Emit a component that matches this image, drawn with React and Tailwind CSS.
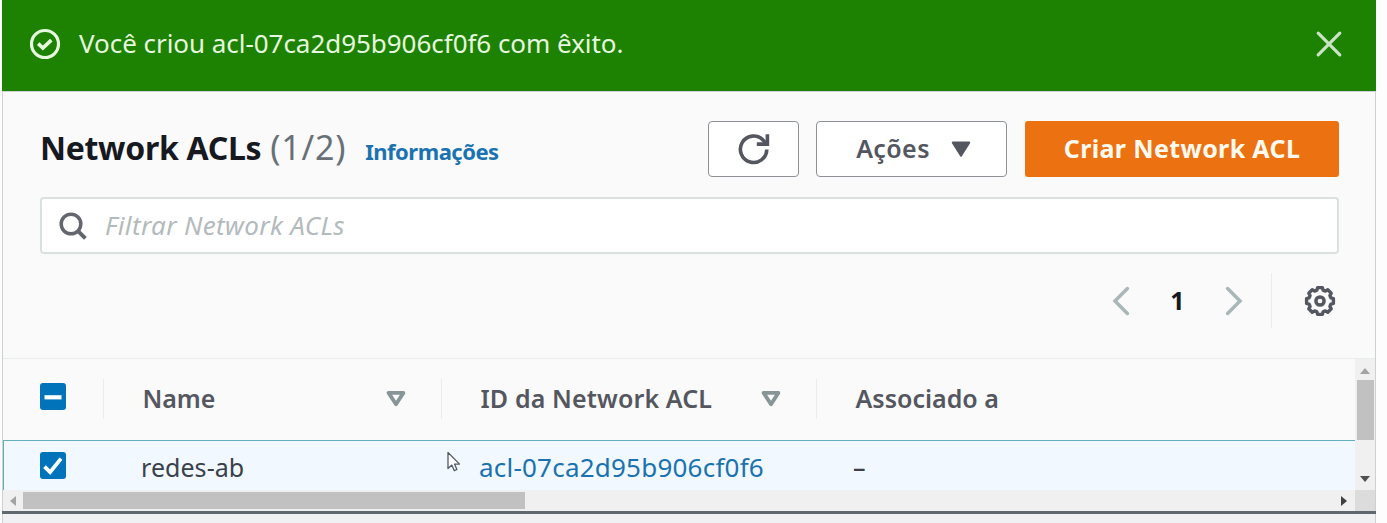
function SuccessIcon() {
  return (
    <svg className="h-8 w-8 shrink-0" viewBox="0 0 32 32" fill="none" stroke="#e6f8df">
      <circle cx="16" cy="16" r="13.5" strokeWidth="3.2" />
      <path d="M9.2 15.6l4.7 4.4 8.4-7.8" strokeWidth="3.7" />
    </svg>
  );
}

function Checkbox({ mixed }) {
  return (
    <span className="flex h-[27px] w-[26px] items-center justify-center rounded-[3px] bg-[#0073bb]">
      <svg className="h-[26px] w-[26px]" viewBox="0 0 26 26" fill="none" stroke="#fff">
        {mixed ? (
          <path d="M4.5 13.3h17" strokeWidth="4.2" />
        ) : (
          <path d="M4.5 13.6l5.6 5.6L21 5.6" strokeWidth="3.8" />
        )}
      </svg>
    </span>
  );
}

function SortIcon() {
  return (
    <svg className="h-4 w-5 shrink-0" viewBox="0 0 20 16" fill="none" stroke="#879596">
      <path d="M2.6 1.9h14.8L10 13.2z" strokeWidth="3.8" strokeLinejoin="round" />
    </svg>
  );
}

function GearIcon() {
  return (
    <svg className="h-8 w-8 shrink-0" viewBox="0 0 32 32" fill="none" stroke="#54575f">
      <circle cx="16" cy="16" r="4.1" strokeWidth="3.5" />
      <path
        d="M13.6 2.6h4.8l.7 2.5 2.3 1 2.4-1.3 3.4 3.4-1.3 2.4 1 2.3 2.5.7v4.8l-2.5.7-1 2.3 1.3 2.4-3.4 3.4-2.4-1.3-2.3 1-.7 2.5h-4.8l-.7-2.5-2.3-1-2.4 1.3-3.4-3.4 1.3-2.4-1-2.3-2.5-.7v-4.8l2.5-.7 1-2.3-1.3-2.4 3.4-3.4 2.4 1.3 2.3-1z"
        strokeWidth="3.4"
        strokeLinejoin="round"
      />
    </svg>
  );
}

function Banner() {
  return (
    <div className="flex h-[91px] shrink-0 items-center bg-[#1d8102] pl-[27px] pr-8 pb-[3px]">
      <SuccessIcon />
      <p className="ml-[18px] flex-1 pb-px text-[26px] tracking-[-0.04px] text-[#e6f8df]">
        Você criou acl-07ca2d95b906cf0f6 com êxito.
      </p>
      <button aria-label="Fechar">
        <svg className="h-[30px] w-[30px]" viewBox="0 0 30 30" stroke="#c9e4c5" strokeWidth="3.2" strokeLinecap="round">
          <path d="M4.2 4.2l21.6 21.6M25.8 4.2L4.2 25.8" />
        </svg>
      </button>
    </div>
  );
}

function Toolbar() {
  return (
    <div className="flex h-[57px] items-start">
      <div className="flex flex-1 items-baseline pt-[9px] leading-none">
        <h1 className="text-[32px] font-bold tracking-[-0.3px] text-[#16191f]">Network ACLs</h1>
        <span className="ml-[9px] text-[34px] tracking-[0.8px] text-[#687078]">(1/2)</span>
        <a className="ml-[19px] text-[22px] font-bold tracking-[-0.5px] text-[#1a72b0]">Informações</a>
      </div>
      <button aria-label="Atualizar" className="flex h-14 w-[91px] items-center justify-center rounded-[4px] border-[1.5px] border-[#8d9196] bg-white">
        <svg className="h-8 w-8" viewBox="0 0 32 32" fill="none" stroke="#54575f" strokeWidth="3.6">
          <path d="M28.8 16.4a13.2 13.2 0 1 1-3.6-9.2l2.8 3.4" />
          <path d="M29.4 1.2v9.9h-10.6" />
        </svg>
      </button>
      <button className="ml-[17px] flex h-14 w-[191px] items-center justify-center rounded-[4px] border-[1.5px] border-[#8d9196] bg-white pl-[4px] text-[25px] font-semibold tracking-[0.4px] text-[#54575f]">
        Ações
        <svg className="ml-[21px] h-4 w-5" viewBox="0 0 20 16" fill="#54575f" stroke="#54575f" strokeLinejoin="round" strokeWidth="2">
          <path d="M1.8 1.6h16.4L10 14.6z" />
        </svg>
      </button>
      <button className="ml-[18px] h-14 w-[314px] rounded-[3px] bg-[#ec7211] text-[25px] font-bold tracking-[0.35px] text-[#fffaf0]">
        Criar Network ACL
      </button>
    </div>
  );
}

function Pagination() {
  return (
    <div className="mt-[18px] flex h-[57px] items-center justify-end pr-[3px]">
      <svg className="h-[30px] w-[18px]" viewBox="0 0 18 30" fill="none" stroke="#aab7b8" strokeWidth="3.5" strokeLinecap="round">
        <path d="M15.4 2.6L3 15l12.4 12.4" />
      </svg>
      <span className="w-[95px] text-center text-[25px] leading-none font-bold text-[#16191f]">1</span>
      <svg className="h-[30px] w-[18px]" viewBox="0 0 18 30" fill="none" stroke="#aab7b8" strokeWidth="3.5" strokeLinecap="round">
        <path d="M2.6 2.6L15 15 2.6 27.4" />
      </svg>
      <span className="ml-[28px] mr-[32px] h-[55px] w-px bg-[#eaeded]" />
      <GearIcon />
    </div>
  );
}

const cols = "grid grid-cols-[100px_338px_375px_1fr]";

function HeaderCell({ children, sortable }) {
  return (
    <div className="flex h-10 items-center justify-between border-l border-[#eaeded] pl-[38.5px] pr-[35px]">
      {children}
      {sortable && <SortIcon />}
    </div>
  );
}

function Table() {
  return (
    <div className="min-w-0 flex-1 overflow-hidden">
      <div className={`${cols} h-[81px] items-center pb-[2px] text-[25px] font-semibold text-[#54575f]`}>
        <div className="pb-[4px] pl-[37px]">
          <Checkbox mixed />
        </div>
        <HeaderCell sortable>
          <span className="tracking-[-0.1px]">Name</span>
        </HeaderCell>
        <HeaderCell sortable>
          <span className="whitespace-nowrap tracking-[0.12px]">ID da Network ACL</span>
        </HeaderCell>
        <HeaderCell>
          <span>Associado a</span>
        </HeaderCell>
      </div>
      <div className={`${cols} -ml-px h-[50px] items-center border-l-2 border-t border-[#64aec4] bg-[#f1f8ff] text-[25px] text-[#3a414a]`}>
        <div className="pl-[36px]">
          <Checkbox />
        </div>
        <span className="pl-[37px] pt-[4px] tracking-[0.05px]">redes-ab</span>
        <span className="pl-[37px] pt-[4px] text-[26px] tracking-[0.22px] text-[#1a72b0]">acl-07ca2d95b906cf0f6</span>
        <span className="pl-[36px] pt-[4px] font-medium">–</span>
      </div>
    </div>
  );
}

function VerticalScrollbar() {
  return (
    <div className="flex w-5 flex-col items-center bg-[#f0f0f0]">
      <svg className="mt-[9px] h-[6px] w-[10px]" viewBox="0 0 10 6" fill="#a3a3a3">
        <path d="M5 0l5 6H0z" />
      </svg>
      <div className="mt-[6px] h-[60px] w-[17px] bg-[#c1c1c1]" />
      <svg className="mt-[36px] h-[6px] w-[10px]" viewBox="0 0 10 6" fill="#505050">
        <path d="M5 6L0 0h10z" />
      </svg>
    </div>
  );
}

function HorizontalScrollbar() {
  return (
    <div className="flex h-[21px]">
      <div className="flex flex-1 items-center bg-[#f0f0f0] pl-[7px] pr-2">
        <svg className="h-[10px] w-[6px]" viewBox="0 0 6 10" fill="#a3a3a3">
          <path d="M0 5l6-5v10z" />
        </svg>
        <div className="ml-[7px] h-[17px] w-[502px] bg-[#c1c1c1]" />
        <svg className="ml-auto h-[10px] w-[6px]" viewBox="0 0 6 10" fill="#404040">
          <path d="M6 5L0 0v10z" />
        </svg>
      </div>
      <div className="w-5 bg-[#dcdcdc]" />
    </div>
  );
}

function Cursor() {
  return (
    <svg className="absolute left-[447px] top-[451px] h-[21px] w-[14px]" viewBox="0 0 14 21" fill="#fff" stroke="#555a66" strokeWidth="1.3" strokeLinejoin="round">
      <path d="M1 1.5v16l3.8-3.4 2.5 5.6 2.6-1.2-2.4-5.4h5z" />
    </svg>
  );
}

export default function App() {
  return (
    <main className="relative h-[523px] w-[1387px] overflow-hidden bg-[#fdfdfd] pl-[2px] pr-[11px] font-['Noto_Sans',sans-serif]">
      <div className="flex h-full flex-col">
        <Banner />
        <div className="flex flex-1 flex-col border-x border-t border-[#cdd1d4] bg-[#fafafa]">
          <div className="h-[266px] pl-[37px] pr-[36px] pt-[29px]">
            <Toolbar />
            <label className="mt-[19px] flex h-[57px] items-center rounded-[4px] border-2 border-[#dbe0e0] bg-white pl-[16px]">
              <svg className="h-[30px] w-[30px]" viewBox="0 0 30 30" fill="none" stroke="#63666d">
                <circle cx="13" cy="13" r="9.8" strokeWidth="3.5" />
                <path d="M19.8 19.8l7.6 7.6" strokeWidth="4" />
              </svg>
              <input
                className="ml-[17px] flex-1 bg-transparent pb-[2px] text-[26px] leading-none tracking-[0.36px] italic outline-none placeholder:text-[#b3babc]"
                placeholder="Filtrar Network ACLs"
              />
            </label>
            <Pagination />
          </div>
          <div className="flex h-[132px] border-t border-[#eaeded]">
            <Table />
            <VerticalScrollbar />
          </div>
          <HorizontalScrollbar />
          <div className="-mx-px h-[3px] bg-[#5f686f]" />
          <div className="flex-1 bg-[#eff1f3]" />
        </div>
      </div>
      <Cursor />
    </main>
  );
}
